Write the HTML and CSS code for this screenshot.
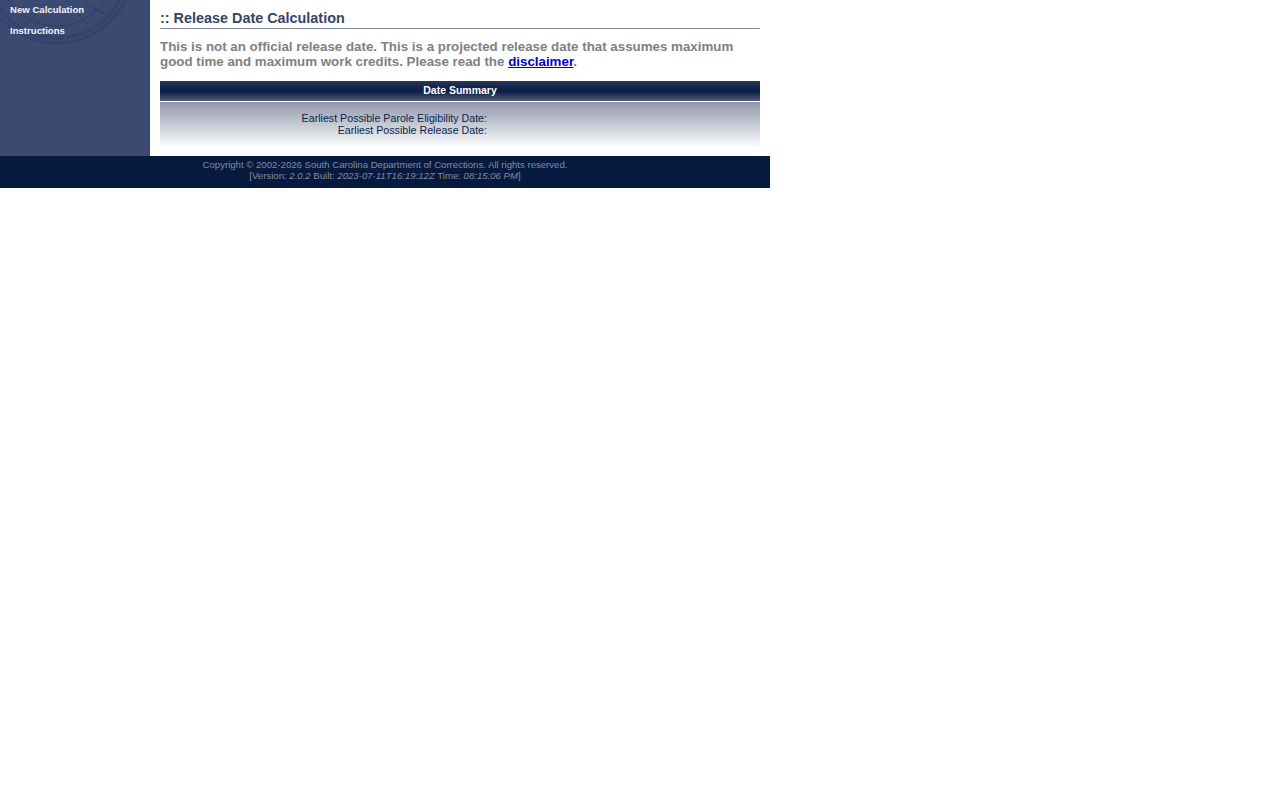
FILE: index.html
```html
<!DOCTYPE html>
<html lang="en">
<head>
    <meta charset="UTF-8">
    <title>Release Date Calculation</title>
    <link rel="stylesheet" href="styles.css">
</head>
<body>
    <div class="page">
        <div class="main">
            <div class="sidebar">
                <svg class="seal" width="150" height="50" viewBox="0 0 150 50" fill="none">
                    <circle cx="57" cy="-33" r="77" stroke="#2e3d63" stroke-width="1"/>
                    <circle cx="57" cy="-33" r="75" stroke="#2e3d63" stroke-width="1.5" stroke-dasharray="1 1"/>
                    <circle cx="57" cy="-33" r="72" stroke="#2e3d63" stroke-width="1"/>
                    <circle cx="57" cy="-33" r="70" stroke="#2e3d63" stroke-width="1"/>
                    <circle cx="57" cy="-33" r="59" stroke="#2e3d63" stroke-width="1"/>
                    <path d="M8 14 L30 4 M106 14 L84 4 M26 24 L42 8 M88 24 L72 8" stroke="#2e3d63" stroke-width="1"/>
                </svg>
                <a class="nav-link" href="#">New Calculation</a>
                <a class="nav-link" href="#">Instructions</a>
            </div>
            <div class="content">
                <h1>:: Release Date Calculation</h1>
                <p class="notice">This is not an official release date. This is a projected release date that assumes maximum good time and maximum work credits. Please read the <a href="#">disclaimer</a>.</p>
                <div class="summary-head">Date Summary</div>
                <div class="summary-body">
                    <div class="summary-row">Earliest Possible Parole Eligibility Date:</div>
                    <div class="summary-row">Earliest Possible Release Date:</div>
                </div>
            </div>
        </div>
        <div class="footer">
            <div>Copyright © 2002-2026 South Carolina Department of Corrections. All rights reserved.</div>
            <div>[Version: <em>2.0.2</em> Built: <em>2023-07-11T16:19:12Z</em> Time: <em>08:15:06 PM</em>]</div>
        </div>
    </div>
</body>
</html>
```

FILE: styles.css
```css
* {
    margin: 0;
    padding: 0;
    box-sizing: border-box;
}

body {
    background-color: #fff;
    font-family: "Liberation Sans", Arial, sans-serif;
}

.page {
    width: 770px;
}

.main {
    display: flex;
    height: 156px;
}

.sidebar {
    position: relative;
    flex: 0 0 150px;
    display: flex;
    flex-direction: column;
    gap: 9px;
    padding: 4px 0 0 10px;
    background-color: #3a4a70;
}

.seal {
    position: absolute;
    top: 0;
    left: 0;
}

.nav-link {
    position: relative;
    font-size: 9.6px;
    line-height: 12px;
    font-weight: bold;
    color: #f2f4f8;
    text-decoration: none;
}

.content {
    flex: 1;
    padding: 10px 10px 0;
}

h1 {
    height: 19px;
    font-size: 14.4px;
    line-height: 16px;
    font-weight: bold;
    color: #364469;
    border-bottom: 1px solid #7f8797;
}

.notice {
    margin-top: 10px;
    font-size: 13.33px;
    line-height: 15px;
    font-weight: bold;
    color: #808080;
}

.notice a {
    color: #0000cc;
}

.summary-head {
    height: 20px;
    margin-top: 12px;
    font-size: 10.5px;
    line-height: 18px;
    font-weight: bold;
    text-align: center;
    color: #fff;
    background: linear-gradient(#2a3859 0%, #0e2149 35%, #0e2149 55%, #525d7a 100%);
}

.summary-body {
    height: 50px;
    margin-top: 1px;
    padding-top: 10px;
    background: linear-gradient(#9097ab, #fff 92%);
}

.summary-row {
    width: 327px;
    font-size: 10.67px;
    line-height: 12px;
    text-align: right;
    color: #0b1f4c;
}

.footer {
    height: 32px;
    padding-top: 3px;
    font-size: 9.6px;
    line-height: 11px;
    text-align: center;
    color: #808a9f;
    background-color: #061a40;
}
```
